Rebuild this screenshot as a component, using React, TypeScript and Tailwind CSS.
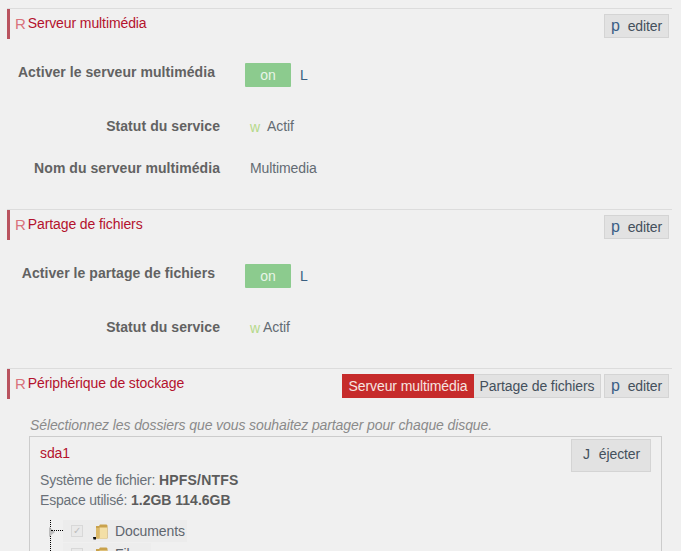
const font = { fontFamily: '"Liberation Sans", Arial, sans-serif' }

function EditButton() {
  return (
    <button className="flex h-6 w-[65px] shrink-0 items-center justify-center border border-[#d4d4d4] bg-[#e2e2e2] text-sm text-[#44505c]">
      <span className="mr-2 text-base leading-none text-[#3a5f86]">p</span>editer
    </button>
  )
}

function SectionHeader({ title, children }: { title: string; children?: React.ReactNode }) {
  return (
    <div className="ml-[7px] mr-[9px] flex h-[31px] border-t border-[#dcdcdc]">
      <div className="flex h-[30px] flex-1 border-l-[3px] border-[#b9535f] pl-[5px] pr-[3px]">
        <div className="flex h-[27px] flex-1 items-center text-sm text-[#b4122d]">
          <span className="mr-[2px] mt-[1px] text-[15px] leading-none text-[#d9737d]">R</span>
          {title}
        </div>
        <div className="mt-[5px] flex items-start">{children ?? <EditButton />}</div>
      </div>
    </div>
  )
}

function Toggle() {
  return (
    <div className="flex items-center">
      <div className="flex h-6 w-[46px] items-center justify-center rounded-[1px] bg-[#8ccb8e] text-sm text-[#e8f5e8]">on</div>
      <span className="ml-[9px] text-sm text-[#3a5f80]">L</span>
    </div>
  )
}

function Label({ children, extra = 'pr-[25px]' }: { children: string; extra?: string }) {
  return <div className={`w-[245px] text-right text-sm font-bold tracking-[0.06px] text-[#626262] ${extra}`}>{children}</div>
}

function Status({ gap }: { gap: string }) {
  return (
    <div className="flex items-center text-sm text-[#636b73]">
      <span className={`ml-[5px] mt-[2px] text-[#b5d98a] ${gap}`}>w</span>
      Actif
    </div>
  )
}

function Folder() {
  return (
    <svg width="15" height="17" viewBox="0 0 15 17" className="shrink-0">
      <path d="M3 3h3l1-1.500h6.500l1 1V15.500h-11.500z" fill="#c9a24c" />
      <path d="M6.500 4.500h7.500v11h-7.500z" fill="#f3dfa6" />
      <path d="M3 5h3v10.500H3z" fill="#dcb968" />
      <path d="M0 14h3v2.500H0.500z" fill="#111" />
    </svg>
  )
}

export default function App() {
  return (
    <div className="h-[551px] w-[681px] overflow-hidden bg-[#f0f0f0] pt-2 tracking-[-0.1px]" style={font}>
      <SectionHeader title="Serveur multimédia" />
      <div className="mt-[24px] flex h-6 items-center">
        <Label extra="mb-[6px] pr-[30px]">Activer le serveur multimédia</Label>
        <Toggle />
      </div>
      <div className="mt-[27px] flex h-[24px] items-center">
        <Label>Statut du service</Label>
        <Status gap="mr-[7px]" />
      </div>
      <div className="mt-[18px] flex h-[24px] items-center">
        <Label>Nom du serveur multimédia</Label>
        <div className="ml-[5px] text-sm text-[#636b73]">Multimedia</div>
      </div>

      <div className="mt-[29px]">
        <SectionHeader title="Partage de fichiers" />
      </div>
      <div className="mt-[24px] flex h-6 items-center">
        <Label extra="mb-[6px] pr-[30px]">Activer le partage de fichiers</Label>
        <Toggle />
      </div>
      <div className="mt-[27px] flex h-[24px] items-center">
        <Label>Statut du service</Label>
        <Status gap="mr-[3px]" />
      </div>

      <div className="mt-[29px]">
        <SectionHeader title="Périphérique de stockage">
          <div className="flex">
            <button className="h-6 w-[132px] bg-[#c62b2b] text-sm text-[#f6e4e0]">Serveur multimédia</button>
            <button className="h-6 w-[127px] border border-l-0 border-[#d4d4d4] bg-[#e2e2e2] text-sm text-[#44505c]">Partage de fichiers</button>
            <div className="ml-[3px]">
              <EditButton />
            </div>
          </div>
        </SectionHeader>
      </div>

      <div className="ml-[29px] mr-[19px] mt-[18px]">
        <div className="ml-px text-sm italic leading-4 text-[#8a8a8a]">Sélectionnez les dossiers que vous souhaitez partager pour chaque disque.</div>
        <div className="mt-[3px] h-[200px] border border-b-0 border-[#cccccc] pl-[10px] pr-[10px] pt-[2px]">
          <div className="flex items-start justify-between">
            <div className="mt-[4px] text-sm text-[#b4122d]">sda1</div>
            <button className="h-[33px] w-[80px] border border-[#d4d4d4] bg-[#e2e2e2] pb-1 pl-px text-sm text-[#44505c]">
              <span className="mr-[9px]">J</span>éjecter
            </button>
          </div>
          <div className="text-sm leading-5 tracking-[-0.2px] text-[#6a7078]">
            <div className="mt-[-2px]">
              Système de fichier: <b className="tracking-[0.2px] text-[#5c5c5c]">HPFS/NTFS</b>
            </div>
            <div>
              Espace utilisé: <b className="tracking-normal text-[#5c5c5c]">1.2GB 114.6GB</b>
            </div>
          </div>
          <div className="relative ml-[10px] mt-[10px] border-l border-dotted border-black pl-[12px]">
            <div className="absolute left-[-2px] top-[7px] h-0 w-0 border-y-[5px] border-l-[6px] border-y-transparent border-l-[#bdbdbd]" />
            <div className="absolute left-0 top-[10px] w-[12px] border-t border-dotted border-black" />
            <div className="flex h-[22px] w-[124px] items-center bg-[#ececec] pl-[8px] text-sm text-[#5f666e]">
              <span className="flex h-3 w-3 items-center justify-center border border-[#d8d8d8] bg-[#e9e9e9] text-[10px] leading-none text-[#bdbdbd]">✓</span>
              <span className="ml-[10px] mr-[7px]">
                <Folder />
              </span>
              Documents
            </div>
            <div className="mt-[1px] flex h-[22px] w-[88px] items-center bg-[#ededed] pl-[8px] text-sm text-[#5f666e]">
              <span className="h-3 w-3 border border-[#d8d8d8] bg-[#e9e9e9]" />
              <span className="ml-[10px] mr-[7px]">
                <Folder />
              </span>
              Films
            </div>
          </div>
        </div>
      </div>
    </div>
  )
}
